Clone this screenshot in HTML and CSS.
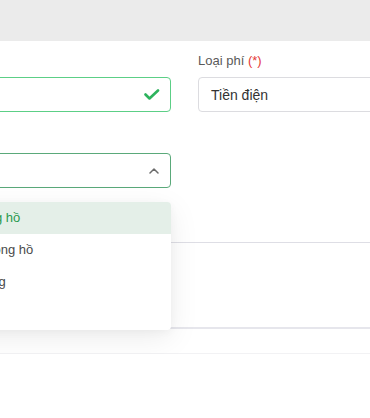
FILE: index.html
```html
<!DOCTYPE html>
<html>
<head>
	<meta charset="utf-8">
	<title>Thêm phí</title>
	<link rel="stylesheet" href="styles.css">
</head>
<body>
	<div class="topbar"></div>
	<div class="panel">
		<div class="form">
			<div class="field">
				<label class="label">&nbsp;</label>
				<div class="input valid">
					<span class="value"></span>
					<svg class="check" width="16" height="12" viewBox="0 0 16 12">
						<path d="M1.5 5.5 L5.5 9.5 L14 1.5" fill="none" stroke="#2db35d" stroke-width="2.6" stroke-linecap="round" stroke-linejoin="round"/>
					</svg>
				</div>
			</div>
			<div class="field">
				<label class="label">Loại phí <span class="req">(*)</span></label>
				<div class="input">
					<span class="value">Tiền điện</span>
				</div>
			</div>
			<div class="field">
				<label class="label">&nbsp;</label>
				<div class="select-wrap">
					<div class="input open">
						<span class="value"></span>
						<svg class="chevron" width="10" height="6" viewBox="0 0 10 6">
							<path d="M1 5 L5 1 L9 5" fill="none" stroke="#6b6b6b" stroke-width="1.5" stroke-linecap="round" stroke-linejoin="round"/>
						</svg>
					</div>
					<ul class="dropdown">
						<li class="option active">Có đồng hồ</li>
						<li class="option">Theo đồng hồ</li>
						<li class="option">Cả tháng</li>
						<li class="option">Khác</li>
					</ul>
				</div>
			</div>
			<div class="field"></div>
		</div>
		<div class="table-box"></div>
		<div class="footer-line"></div>
	</div>
</body>
</html>
```
FILE: styles.css
```css
html, body {
	margin: 0;
	padding: 0;
	background: #ffffff;
	font-family: "Liberation Sans", Arial, sans-serif;
	overflow: hidden;
}
.topbar {
	height: 41px;
	background: #ebebeb;
}
.panel {
	padding-top: 12px;
}
.form {
	display: grid;
	grid-template-columns: 230px 230px;
	column-gap: 27px;
	row-gap: 17px;
	margin-left: -59px;
}
.label {
	display: block;
	font-size: 13px;
	line-height: 16px;
	color: #595959;
	margin-bottom: 8px;
}
.req {
	color: #e53935;
}
.input {
	box-sizing: border-box;
	height: 35px;
	border: 1px solid #dcdce0;
	border-radius: 4px;
	display: flex;
	align-items: center;
	padding: 0 12px;
	background: #fff;
}
.input .value {
	flex: 1;
	font-size: 14px;
	color: #333;
}
.input.valid {
	border-color: #5ccf86;
}
.input.open {
	border-color: #5aa97a;
}
.check {
	margin-right: -2px;
}
.chevron {
	margin-right: -1px;
}
.select-wrap {
	position: relative;
}
.dropdown {
	position: absolute;
	z-index: 2;
	left: 0;
	right: 0;
	top: calc(100% + 14px);
	margin: 0;
	padding: 0;
	list-style: none;
	background: #fff;
	border-radius: 4px;
	overflow: hidden;
	box-shadow: 0 8px 30px rgba(0, 0, 0, 0.08), 0 2px 8px rgba(0, 0, 0, 0.04);
}
.option {
	height: 32px;
	line-height: 32px;
	padding-left: 12px;
	font-size: 13px;
	color: #4a4a4a;
}
.option.active {
	background: #e4efe8;
	color: #2a9a4e;
}
.table-box {
	margin-top: 54px;
	height: 84px;
	border-top: 1px solid #dedee5;
	border-bottom: 2px solid #e6e6ec;
}
.footer-line {
	margin-top: 24px;
	border-top: 1px solid #f2f2f4;
}
```
